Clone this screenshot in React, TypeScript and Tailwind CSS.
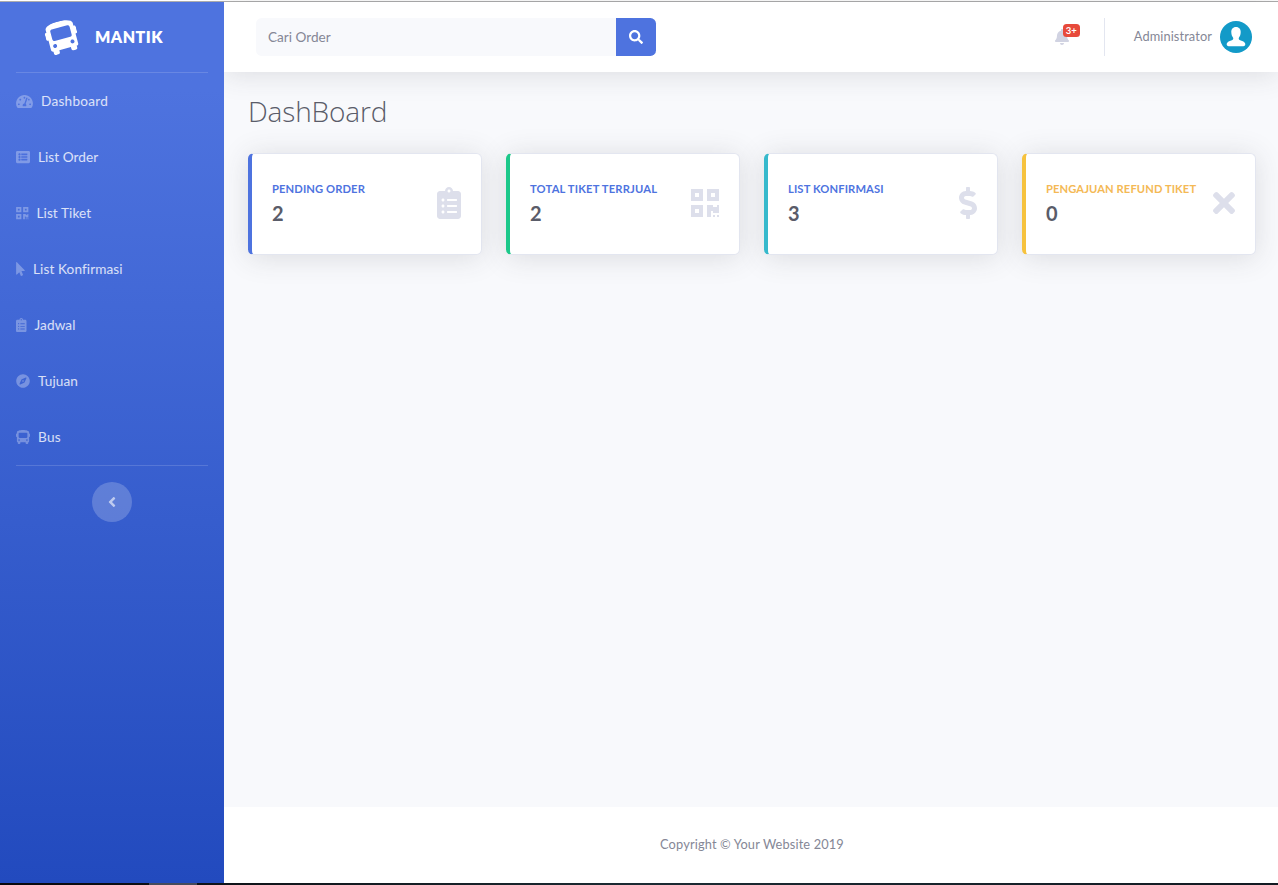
import React from "react";
import {
  FaTachometerAlt, FaListAlt, FaQrcode, FaMousePointer, FaClipboardList, FaCompass, FaBus,
  FaAngleLeft, FaBell, FaSearch, FaDollarSign, FaTimes,
} from "react-icons/fa";

const nav = [
  { label: "Dashboard", Icon: FaTachometerAlt, icon: "w-[17px] h-[15px]", text: "tracking-[0.25px]" },
  { label: "List Order", Icon: FaListAlt, icon: "w-[14px] h-[14px]", text: "tracking-[0.05px]" },
  { label: "List Tiket", Icon: FaQrcode, icon: "w-[12.5px] h-[14px]", text: "tracking-[0.08px]" },
  { label: "List Konfirmasi", Icon: FaMousePointer, icon: "w-[9px] h-[14px]", text: "tracking-[0.1px]" },
  { label: "Jadwal", Icon: FaClipboardList, icon: "w-[10.5px] h-[14px]", text: "tracking-[0.1px]" },
  { label: "Tujuan", Icon: FaCompass, icon: "w-[14px] h-[14px]", text: "tracking-[0.1px]" },
  { label: "Bus", Icon: FaBus, icon: "w-[14px] h-[14px]", text: "tracking-[0.3px]" },
];

const cards = [
  { label: "PENDING ORDER", value: "2", Icon: FaClipboardList, icon: "w-6 h-8", border: "border-l-[#4e73df]", text: "text-[#4e73df] tracking-[0.1px]" },
  { label: "TOTAL TIKET TERRJUAL", value: "2", Icon: FaQrcode, icon: "w-7 h-8", border: "border-l-[#1cc88a]", text: "text-[#4e73df] tracking-[0.18px]" },
  { label: "LIST KONFIRMASI", value: "3", Icon: FaDollarSign, icon: "w-[18px] h-8", border: "border-l-[#36b9cc]", text: "text-[#4e73df] tracking-[0.12px]" },
  { label: "PENGAJUAN REFUND TIKET", value: "0", Icon: FaTimes, icon: "w-[22px] h-8", border: "border-l-[#f6c23e]", text: "text-[#f4b955] tracking-[0.08px]" },
];

function Sidebar() {
  return (
    <aside className="z-20 flex w-56 shrink-0 flex-col bg-linear-to-b from-[#4e73df] from-10% to-[#224abe] px-4">
      <div className="flex h-[70px] items-center justify-center gap-[17px]">
        <FaBus className="h-8 w-8 -rotate-15 text-white" />
        <span className="mr-[15px] text-base font-extrabold leading-6 tracking-[0.5px] text-white">MANTIK</span>
      </div>
      <div className="h-px bg-white/15" />
      <nav className="flex flex-col">
        {nav.map(({ label, Icon, icon, text }) => (
          <a key={label} className="flex h-14 items-center gap-2 text-[13.6px] text-white/80">
            <Icon className={`${icon} shrink-0 text-white/30`} />
            <span className={text}>{label}</span>
          </a>
        ))}
      </nav>
      <div className="h-px bg-white/15" />
      <button className="mt-4 flex h-10 w-10 items-center justify-center self-center rounded-full bg-white/20">
        <FaAngleLeft className="h-4 w-4 text-white/60" />
      </button>
    </aside>
  );
}

function Avatar() {
  return (
    <svg viewBox="0 0 32 32" className="h-8 w-8">
      <circle cx="16" cy="16" r="16" fill="#139ac8" />
      <path
        fill="#fff"
        d="M16 6c-3.300 0-4.800 2.300-4.700 5.200.1 2.500.8 4.100 1.700 5.400.5.900.3 2-.6 2.500-1.500.9-3.700 1.200-4.900 2.300-.8.700-.9 1.700-.7 2.500.2.800 1.400 1.300 3 1.300h12.400c1.600 0 2.800-.5 3-1.300.2-.8.100-1.800-.7-2.500-1.200-1.100-3.400-1.400-4.900-2.300-.9-.5-1.100-1.600-.6-2.500.9-1.300 1.600-2.900 1.700-5.400C20.800 8.300 19.300 6 16 6z"
      />
    </svg>
  );
}

function Topbar() {
  return (
    <header className="z-10 flex h-[70px] shrink-0 items-center justify-between bg-white pl-8 pr-[26px] shadow-[0_2.4px_28px_0_rgba(58,59,69,0.15)]">
      <div className="flex h-[38px] w-[400px]">
        <input
          placeholder="Cari Order"
          className="min-w-0 flex-1 rounded-l-[5.6px] bg-[#f8f9fc] px-3 text-[13.6px] outline-none placeholder:text-[#858796]"
        />
        <button className="flex w-10 items-center justify-center rounded-r-[5.6px] bg-[#4e73df] text-white">
          <FaSearch className="h-3.5 w-3.5" />
        </button>
      </div>
      <div className="flex items-center">
        <div className="relative mr-[34px]">
          <FaBell className="h-4 w-4 text-[#d1d3e2]" />
          <span className="absolute -top-[5px] left-[9px] flex h-[13px] w-[17px] items-center justify-center rounded-[3.5px] bg-[#e74a3b] text-[9.5px] font-bold leading-none text-white">
            3+
          </span>
        </div>
        <div className="h-[38px] w-px bg-[#e3e6f0]" />
        <span className="ml-[29px] mr-2 text-[12.8px] tracking-[0.1px]">Administrator</span>
        <Avatar />
      </div>
    </header>
  );
}

export default function App() {
  return (
    <div className="flex h-[885px] w-full flex-col overflow-hidden bg-white pt-px font-['Lato',sans-serif] text-[#858796]">
      <div className="h-px shrink-0 bg-[#adadad]" />
      <div className="flex min-h-0 flex-1">
        <Sidebar />
        <div className="flex min-w-0 flex-1 flex-col bg-[#f8f9fc]">
          <Topbar />
          <main className="flex-1 pl-6 pr-[22px] pt-[22px]">
            <h1 className="font-['Open_Sans',sans-serif] text-[28px] font-light leading-[34px] tracking-[-0.15px] text-[#5a5c69]">DashBoard</h1>
            <div className="mt-[25px] grid grid-cols-4 gap-6">
              {cards.map(({ label, value, Icon, icon, border, text }) => (
                <section
                  key={label}
                  className={`${border} flex h-[102px] items-center justify-between rounded-[5.6px] border border-l-4 border-[#e3e6f0] bg-white pl-5 pr-5 shadow-[0_2.4px_28px_0_rgba(58,59,69,0.15)]`}
                >
                  <div className="w-0 pb-1">
                    <div className={`${text} mb-1 whitespace-nowrap text-[11.2px] font-bold leading-[17px]`}>{label}</div>
                    <div className="text-xl font-bold leading-6 text-[#5a5c69]">{value}</div>
                  </div>
                  <Icon className={`${icon} mb-0.5 shrink-0 text-[#dddfeb]`} />
                </section>
              ))}
            </div>
          </main>
          <footer className="flex h-[76px] shrink-0 items-center justify-center bg-white pl-0.5 text-[12.8px] tracking-[0.14px]">
            Copyright © Your Website 2019
          </footer>
        </div>
      </div>
      <div className="flex h-0.5 shrink-0 bg-linear-to-r from-[#08080c] via-[#1b2b33] to-[#121a22] pl-[149px]">
        <div className="w-12 bg-[#454b5c]" />
      </div>
    </div>
  );
}
